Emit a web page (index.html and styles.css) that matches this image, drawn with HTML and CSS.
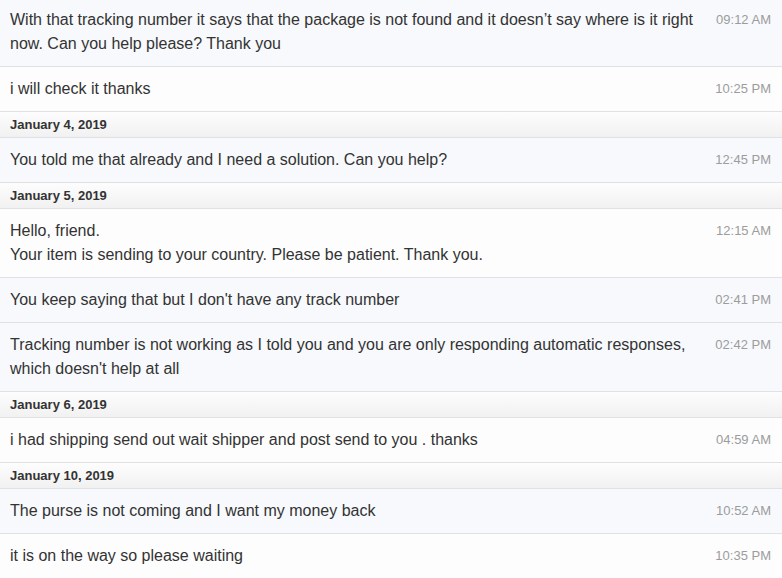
FILE: index.html
```html
<!DOCTYPE html>
<html>
<head>
<meta charset="utf-8">
<link rel="stylesheet" href="styles.css">
</head>
<body>
<div class="thread">
  <div class="msg buyer first">
    <div class="text">With that tracking number it says that the package is not found and it doesn’t say where is it right now. Can you help please? Thank you</div>
    <div class="time">09:12 AM</div>
  </div>
  <div class="msg seller">
    <div class="text">i will check it thanks</div>
    <div class="time">10:25 PM</div>
  </div>
  <div class="date">January 4, 2019</div>
  <div class="msg buyer">
    <div class="text">You told me that already and I need a solution. Can you help?</div>
    <div class="time">12:45 PM</div>
  </div>
  <div class="date">January 5, 2019</div>
  <div class="msg seller">
    <div class="text">Hello, friend.<br>Your item is sending to your country. Please be patient. Thank you.</div>
    <div class="time">12:15 AM</div>
  </div>
  <div class="msg buyer">
    <div class="text">You keep saying that but I don't have any track number</div>
    <div class="time">02:41 PM</div>
  </div>
  <div class="msg buyer">
    <div class="text">Tracking number is not working as I told you and you are only responding automatic responses, which doesn't help at all</div>
    <div class="time">02:42 PM</div>
  </div>
  <div class="date">January 6, 2019</div>
  <div class="msg seller">
    <div class="text">i had shipping send out wait shipper and post send to you . thanks</div>
    <div class="time">04:59 AM</div>
  </div>
  <div class="date">January 10, 2019</div>
  <div class="msg buyer">
    <div class="text">The purse is not coming and I want my money back</div>
    <div class="time">10:52 AM</div>
  </div>
  <div class="msg seller">
    <div class="text">it is on the way so please waiting</div>
    <div class="time">10:35 PM</div>
  </div>
</div>
</body>
</html>
```
FILE: styles.css
```css
html, body {
  margin: 0;
  padding: 0;
  background: #ffffff;
}
body {
  font-family: "Liberation Sans", Arial, Helvetica, sans-serif;
  color: #333333;
  overflow: hidden;
}
.thread {
  margin-top: -2px;
}
.msg {
  display: flex;
  align-items: flex-start;
  padding: 10px 11px 10px 10px;
  border-bottom: 1px solid #dfe1e4;
  font-size: 16px;
  line-height: 24px;
}
.msg.buyer {
  background: #f7f9fc;
}
.msg.seller {
  background: #fdfdfd;
}
.text {
  flex: 1;
  min-width: 0;
}
.time {
  flex: none;
  margin-left: 14px;
  font-size: 13px;
  color: #9c9c9c;
  white-space: nowrap;
}
.date {
  padding: 4px 10px;
  line-height: 17px;
  font-size: 13px;
  font-weight: bold;
  color: #333333;
  background: linear-gradient(#fdfdfd, #f1f1f1);
  border-bottom: 1px solid #dfe1e4;
}
```
